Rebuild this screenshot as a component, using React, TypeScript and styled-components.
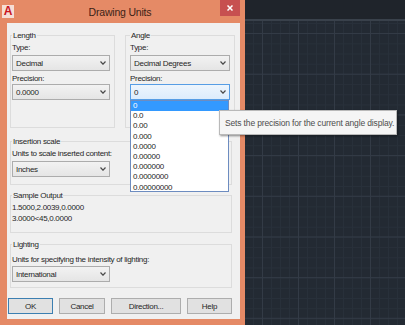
import styled, { createGlobalStyle } from 'styled-components'

const GlobalStyle = createGlobalStyle`
  html, body {
    margin: 0;
    padding: 0;
  }
  body {
    width: 405px;
    height: 325px;
    overflow: hidden;
    background: #232a33;
    font-family: "Liberation Sans", Arial, sans-serif;
  }
`

const Screen = styled.div`
  position: relative;
  display: flex;
  width: 405px;
  height: 325px;
`

const Dialog = styled.div`
  width: 245px;
  flex: none;
  display: flex;
  flex-direction: column;
  background: #e58a66;
`

const TitleBar = styled.div`
  height: 23px;
  flex: none;
  display: flex;
  align-items: flex-start;
`

const AppIcon = styled.div`
  width: 12px;
  height: 13px;
  margin: 5px 0 0 2px;
  background: #f6ded5;
  color: #c8141e;
  font: bold 12px/13px "Liberation Sans", Arial, sans-serif;
  text-align: center;
`

const Title = styled.div`
  flex: 1;
  padding: 6px 0 0 6px;
  text-align: center;
  font-size: 10.5px;
  line-height: 12px;
  letter-spacing: -0.2px;
  color: #3b2217;
`

const CloseButton = styled.div`
  width: 20px;
  height: 16px;
  margin-right: 5px;
  background: #c75050;
  display: flex;
  align-items: center;
  justify-content: center;
`

const Body = styled.div`
  flex: 1;
  margin: 0 5px 6px 7px;
  padding: 6.5px 0 5px 3px;
  background: #f0f0f0;
  display: flex;
  flex-direction: column;
  font-size: 8px;
  letter-spacing: -0.3px;
  color: #262626;
`

const TopRow = styled.div`
  display: flex;
  gap: 10px;
`

const Group = styled.fieldset<{ $width: number; $pad: string; $mt?: number }>`
  box-sizing: border-box;
  width: ${(p) => p.$width}px;
  min-width: 0;
  margin: ${(p) => p.$mt ?? 0}px 0 0 0;
  padding: ${(p) => p.$pad};
  border: 1px solid #dcdcdc;
`

const Legend = styled.legend`
  padding: 0 1px;
  line-height: 11px;
`

const Label = styled.div<{ $mt?: number }>`
  margin-top: ${(p) => p.$mt ?? 0}px;
  line-height: 11px;
  white-space: nowrap;
`

const Select = styled.div<{ $width: number; $mt: number; $focus?: boolean }>`
  position: relative;
  box-sizing: border-box;
  width: ${(p) => p.$width}px;
  height: 16px;
  margin-top: ${(p) => p.$mt}px;
  padding-left: 3px;
  display: flex;
  align-items: center;
  border: 1px solid ${(p) => (p.$focus ? '#569de5' : '#acacac')};
  background: ${(p) =>
    p.$focus ? 'linear-gradient(#edf5fd, #dcecfc)' : 'linear-gradient(#f2f2f2, #e5e5e5)'};
  white-space: nowrap;
`

const Chevron = styled.svg`
  margin-left: auto;
  margin-right: 3px;
`

const DropList = styled.div`
  position: absolute;
  top: calc(100% + 1px);
  left: -1px;
  width: 99px;
  height: 92px;
  box-sizing: border-box;
  background: #fff;
  border: 1px solid #6d8cc0;
  z-index: 2;
`

const Option = styled.div<{ $active?: boolean }>`
  height: 10.2px;
  line-height: 10.2px;
  padding-left: 2px;
  background: ${(p) => (p.$active ? '#3399ff' : 'transparent')};
  color: ${(p) => (p.$active ? '#fff' : '#262626')};
`

const ButtonRow = styled.div`
  display: flex;
  gap: 6px;
  margin: 10px 0 0 -2px;
`

const Button = styled.div<{ $width: number; $primary?: boolean }>`
  box-sizing: border-box;
  width: ${(p) => p.$width}px;
  height: 16px;
  display: flex;
  align-items: center;
  justify-content: center;
  background: #e1e1e1;
  border: 1px solid ${(p) => (p.$primary ? '#3c7fb1' : '#adadad')};
`

const Canvas = styled.div`
  flex: 1;
  display: flex;
  flex-direction: column;
`

const TopBand = styled.div`
  height: 19px;
  background: #1f242b;
  border-bottom: 2px solid #39414b;
`

const GridArea = styled.div`
  flex: 1;
  background-color: #232a33;
  background-image:
    linear-gradient(to right, #333b46 0 1px, transparent 1px),
    linear-gradient(to bottom, #333b46 0 1px, transparent 1px),
    linear-gradient(to right, #28303a 0 1px, transparent 1px),
    linear-gradient(to bottom, #28303a 0 1px, transparent 1px);
  background-size: 36px 100%, 100% 40.7px, 9px 100%, 100% 10.2px;
  background-position: 17px 0, 0 12px, 8px 0, 0 2px;
`

const Tooltip = styled.div`
  position: absolute;
  left: 219px;
  top: 110px;
  width: 178px;
  height: 25px;
  box-sizing: border-box;
  padding-left: 5px;
  display: flex;
  align-items: center;
  background: #f5f5f5;
  border: 1px solid #b9b9b9;
  box-shadow: 1px 1px 2px rgba(0, 0, 0, 0.45);
  font-size: 8.5px;
  letter-spacing: -0.15px;
  color: #4d4d4d;
  white-space: nowrap;
  z-index: 3;
`

const Down = () => (
  <Chevron width="6" height="4" viewBox="0 0 6 4">
    <polyline points="0.5,0.5 3,3.2 5.5,0.5" fill="none" stroke="#4a4a4a" strokeWidth="1.2" />
  </Chevron>
)

const precisions = ['0', '0.0', '0.00', '0.000', '0.0000', '0.00000', '0.000000', '0.0000000', '0.00000000']

export default function App() {
  return (
    <Screen>
      <GlobalStyle />
      <Dialog>
        <TitleBar>
          <AppIcon>A</AppIcon>
          <Title>Drawing Units</Title>
          <CloseButton>
            <svg width="6" height="6" viewBox="0 0 6 6">
              <path d="M0.5 0.5 L5.5 5.5 M5.5 0.5 L0.5 5.5" stroke="#fff" strokeWidth="1.5" />
            </svg>
          </CloseButton>
        </TitleBar>

        <Body>
          <TopRow>
            <Group $width={105} $pad="1px 4px 27px 1px">
              <Legend>Length</Legend>
              <Label>Type:</Label>
              <Select $width={98} $mt={2.5}>
                Decimal
                <Down />
              </Select>
              <Label $mt={2}>Precision:</Label>
              <Select $width={98} $mt={0}>
                0.0000
                <Down />
              </Select>
            </Group>

            <Group $width={110} $pad="1px 4px 27px 4px">
              <Legend>Angle</Legend>
              <Label>Type:</Label>
              <Select $width={100} $mt={2.5}>
                Decimal Degrees
                <Down />
              </Select>
              <Label $mt={2}>Precision:</Label>
              <Select $width={100} $mt={0} $focus>
                0
                <Down />
                <DropList>
                  {precisions.map((p, i) => (
                    <Option key={p} $active={i === 0}>
                      {p}
                    </Option>
                  ))}
                </DropList>
              </Select>
            </Group>
          </TopRow>

          <Group $width={222} $pad="1px 4px 7px 1px" $mt={7.5}>
            <Legend>Insertion scale</Legend>
            <Label>Units to scale inserted content:</Label>
            <Select $width={98} $mt={2.5}>
              Inches
              <Down />
            </Select>
          </Group>

          <Group $width={222} $pad="1px 4px 8.5px 1px" $mt={4.5}>
            <Legend>Sample Output</Legend>
            <Label>1.5000,2.0039,0.0000</Label>
            <Label>3.0000&lt;45,0.0000</Label>
          </Group>

          <Group $width={222} $pad="4px 4px 5px 1px" $mt={5.5}>
            <Legend>Lighting</Legend>
            <Label>Units for specifying the intensity of lighting:</Label>
            <Select $width={98} $mt={1.5}>
              International
              <Down />
            </Select>
          </Group>

          <ButtonRow>
            <Button $width={45} $primary>OK</Button>
            <Button $width={46}>Cancel</Button>
            <Button $width={70}>Direction...</Button>
            <Button $width={45}>Help</Button>
          </ButtonRow>
        </Body>
      </Dialog>

      <Canvas>
        <TopBand />
        <GridArea />
      </Canvas>

      <Tooltip>Sets the precision for the current angle display.</Tooltip>
    </Screen>
  )
}
